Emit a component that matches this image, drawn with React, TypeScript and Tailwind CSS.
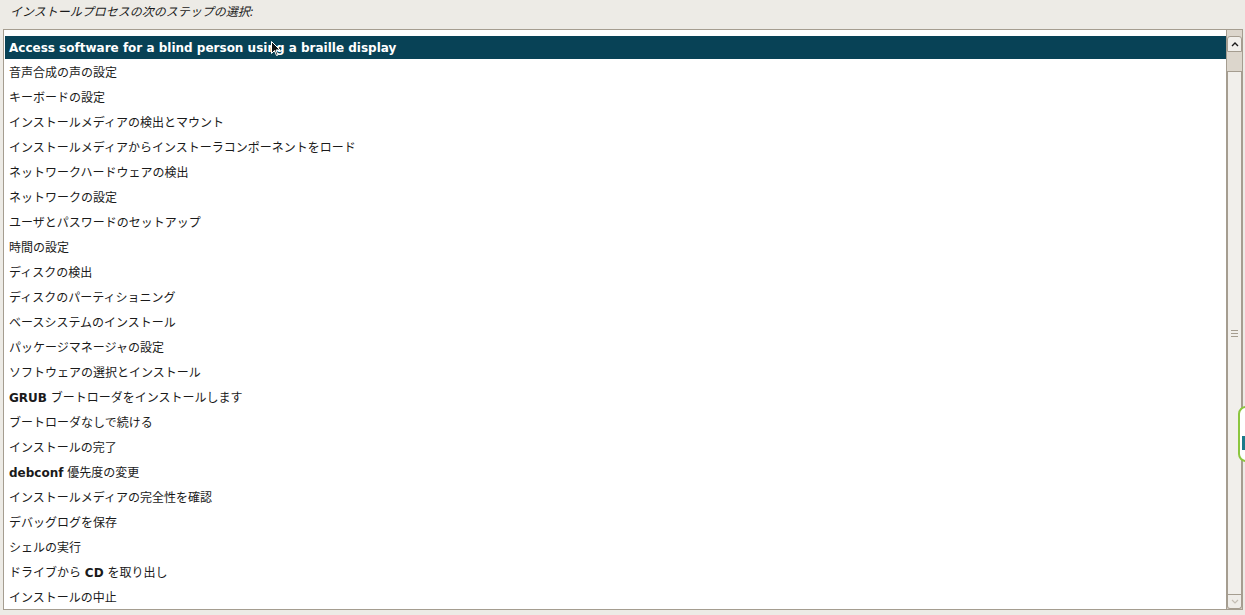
import React from 'react';

const steps: { label: React.ReactNode }[] = [
  { label: <b>Access software for a blind person using a braille display</b> },
  { label: '音声合成の声の設定' },
  { label: 'キーボードの設定' },
  { label: 'インストールメディアの検出とマウント' },
  { label: 'インストールメディアからインストーラコンポーネントをロード' },
  { label: 'ネットワークハードウェアの検出' },
  { label: 'ネットワークの設定' },
  { label: 'ユーザとパスワードのセットアップ' },
  { label: '時間の設定' },
  { label: 'ディスクの検出' },
  { label: 'ディスクのパーティショニング' },
  { label: 'ベースシステムのインストール' },
  { label: 'パッケージマネージャの設定' },
  { label: 'ソフトウェアの選択とインストール' },
  { label: <><b>GRUB</b> ブートローダをインストールします</> },
  { label: 'ブートローダなしで続ける' },
  { label: 'インストールの完了' },
  { label: <><b>debconf</b> 優先度の変更</> },
  { label: 'インストールメディアの完全性を確認' },
  { label: 'デバッグログを保存' },
  { label: 'シェルの実行' },
  { label: <>ドライブから <b>CD</b> を取り出し</> },
  { label: 'インストールの中止' },
];

export default function App() {
  return (
    <div
      className="relative w-[1245px] h-[615px] bg-[#edebe6] overflow-hidden text-[12px] text-[#1a1a1a]"
      style={{ fontFamily: '"DejaVu Sans", "Noto Sans CJK JP", sans-serif' }}
    >
      <div className="h-[29px] pl-[10px] pt-[3px] italic leading-[18px]">
        インストールプロセスの次のステップの選択:
      </div>

      <div className="ml-[3px] mr-[2px] h-[581px] border border-[#a59d90] bg-white flex">
        <div className="flex-1 pl-[1px] pt-[6px]">
          {steps.map((s, i) => (
            <div
              key={i}
              className={
                i === 0
                  ? 'h-[23px] mb-[2px] pl-[4px] flex items-center bg-[#084256] text-white'
                  : 'h-[23px] mb-[2px] pl-[4px] flex items-center'
              }
            >
              <span>{s.label}</span>
            </div>
          ))}
        </div>

        {/* scrollbar */}
        <div className="w-[16px] bg-[#dcd6cc] border-l border-[#a59d90] flex flex-col">
          <div className="h-[16px] mt-[6px] bg-[#f1efeb] border border-[#a59d90] rounded-t-[3px] flex items-center justify-center">
            <svg width="8" height="5" viewBox="0 0 8 5">
              <path d="M1 4 L4 1 L7 4" fill="none" stroke="#1a1a1a" strokeWidth="1.4" />
            </svg>
          </div>
          <div className="h-[19px]" />
          <div className="flex-1 bg-[#f1efeb] border border-[#a59d90] flex items-center justify-center">
            <div className="flex flex-col gap-[2px]">
              <div className="w-[7px] h-[1px] bg-[#a59d90]" />
              <div className="w-[7px] h-[1px] bg-[#a59d90]" />
              <div className="w-[7px] h-[1px] bg-[#a59d90]" />
            </div>
          </div>
          <div className="h-[14px] bg-[#efede9] border border-t-0 border-[#a59d90] rounded-b-[3px] flex items-center justify-center">
            <svg width="8" height="5" viewBox="0 0 8 5">
              <path d="M1 1 L4 4 L7 1" fill="none" stroke="#c4beb4" strokeWidth="1.2" />
            </svg>
          </div>
        </div>
      </div>

      {/* green edge overlay */}
      <div className="absolute left-[1238px] top-[406px] w-[20px] h-[56px] rounded-[8px] border-2 border-[#8cc63f] bg-white">
        <div className="absolute left-[2px] top-[28px] w-[3px] h-[14px] bg-[#1b7a8a]" />
      </div>

      {/* mouse pointer */}
      <svg className="absolute left-[271px] top-[41px]" width="10" height="16" viewBox="0 0 10 16">
        <path d="M0.5 0.5 L0.5 12.5 L3.5 9.5 L5.5 14.5 L7 14 L5 9 L9 9 Z" fill="#111" stroke="#fff" strokeWidth="1" />
      </svg>
    </div>
  );
}
